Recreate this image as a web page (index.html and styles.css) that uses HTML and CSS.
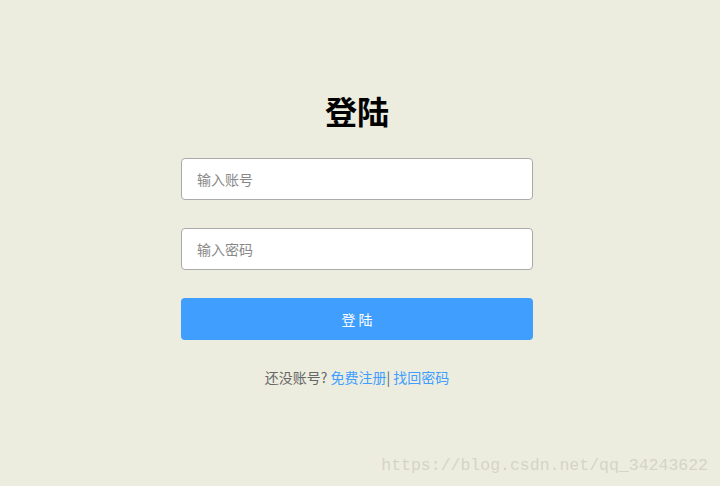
FILE: index.html
```html
<!DOCTYPE html>
<html lang="zh-CN">
<head>
    <meta charset="UTF-8">
    <meta name="viewport" content="width=device-width, initial-scale=1.0">
    <title>登陆</title>

    <link rel="stylesheet" href="styles.css">
</head>
<body>
    <div class="login">
        <h1>登陆</h1>
        <form id="loginForm">
            <input type="text" name="account" placeholder="输入账号">
            <input type="password" name="password" placeholder="输入密码">
            <button type="submit">登 陆</button>
        </form>
        <p class="links">还没账号? <a href="#">免费注册</a>| <a href="#">找回密码</a></p>
    </div>

    <div class="watermark">https://blog.csdn.net/qq_34243622</div>
</body>
</html>
```

FILE: styles.css
```css
/* General styling */
body, html {
    margin: 0;
    padding: 0;
    width: 100%;
    height: 100%;
    font-family: "Microsoft YaHei", "Noto Sans CJK SC", sans-serif;
    background-color: #ededdf;
}

/* Login box */
.login {
    width: 352px;
    margin-left: 181px;
    padding-top: 90px;
}

.login h1 {
    margin: 0 0 28px 0;
    font-size: 32px;
    line-height: 40px;
    font-weight: bold;
    text-align: center;
    color: #000;
}

/* Form styling */
#loginForm {
    display: flex;
    flex-direction: column;
    gap: 28px;
}

#loginForm input {
    box-sizing: border-box;
    width: 100%;
    height: 42px;
    padding: 0 15px;
    border: 1px solid #aaa;
    border-radius: 4px;
    background-color: #fff;
    font-family: inherit;
    font-size: 14px;
    color: #333;
}

#loginForm input::placeholder {
    color: #888;
}

#loginForm button {
    height: 42px;
    border: none;
    border-radius: 4px;
    background-color: #409eff;
    color: #fff;
    font-family: inherit;
    font-size: 14px;
    cursor: pointer;
}

/* Links under the form */
.links {
    margin: 27px 0 0 0;
    font-size: 14px;
    line-height: 20px;
    text-align: center;
    color: #666;
}

.links a {
    color: #409eff;
    text-decoration: none;
}

/* Watermark */
.watermark {
    position: absolute;
    right: 12px;
    top: 455px;
    font-family: "Liberation Mono", monospace;
    font-size: 16.5px;
    line-height: 22px;
    color: #d4d4c8;
}
```
